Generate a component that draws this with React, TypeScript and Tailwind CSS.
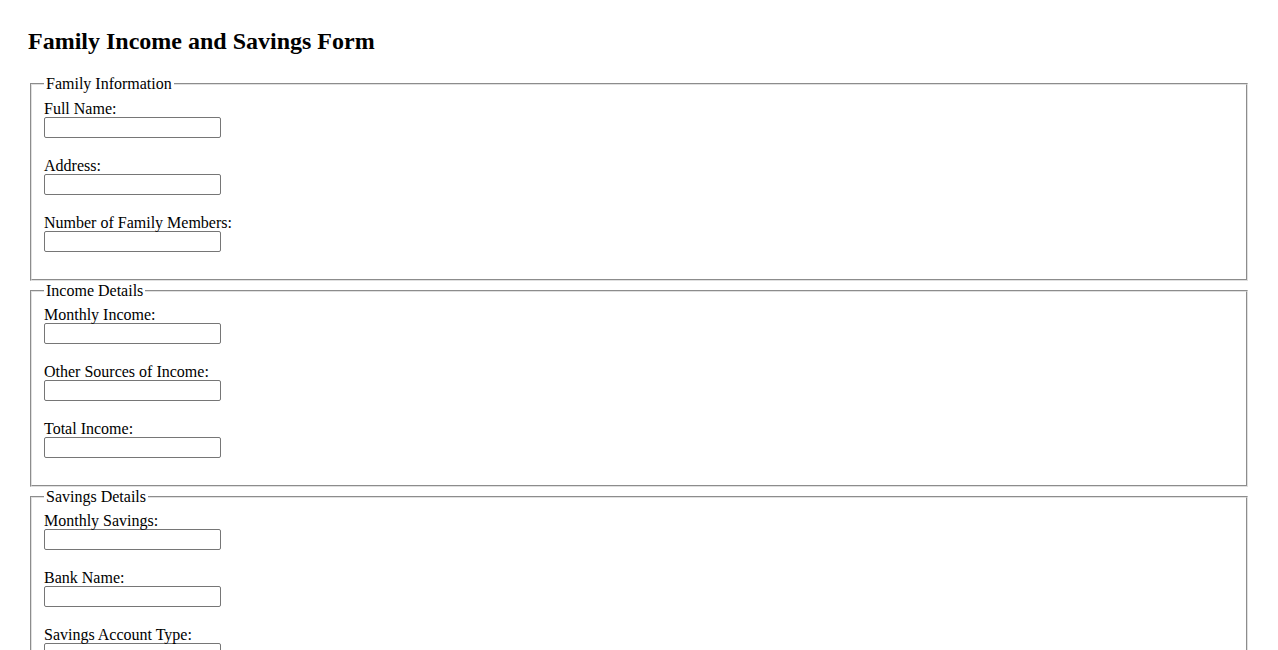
import React from "react";

const sections: { legend: string; fields: string[] }[] = [
  { legend: "Family Information", fields: ["Full Name:", "Address:", "Number of Family Members:"] },
  { legend: "Income Details", fields: ["Monthly Income:", "Other Sources of Income:", "Total Income:"] },
  { legend: "Savings Details", fields: ["Monthly Savings:", "Bank Name:", "Savings Account Type:"] },
];

export default function App() {
  return (
    <div className="min-h-[650px] bg-white px-[28px] pt-[27px] text-black text-[16px]" style={{ fontFamily: '"Liberation Serif", "Times New Roman", serif' }}>
      <h2 className="text-[24px] font-bold leading-[28px] mb-[20px]">Family Income and Savings Form</h2>
      {sections.map((s, i) => (
        <fieldset
          key={s.legend}
          className={
            i === 0
              ? "mx-[2px] border-2 [border-style:groove] border-[#e0e0e0] px-[12px] pt-[6px] pb-[9px]"
              : "mx-[2px] mt-[1px] border-2 [border-style:groove] border-[#e0e0e0] px-[12px] pt-[5px] pb-[9px]"
          }
        >
          <legend className="px-[2px] leading-[18px]">{s.legend}</legend>
          {s.fields.map((f) => (
            <div key={f} className="mb-[18px]">
              <label className="block leading-[20px] h-[18px]">{f}</label>
              <input
                type="text"
                className="block h-[21px] w-[177px] border border-[#767676] rounded-[2px] bg-white px-[2px] text-[13px]"
                style={{ fontFamily: '"Liberation Sans", Arial, sans-serif' }}
              />
            </div>
          ))}
        </fieldset>
      ))}
    </div>
  );
}
